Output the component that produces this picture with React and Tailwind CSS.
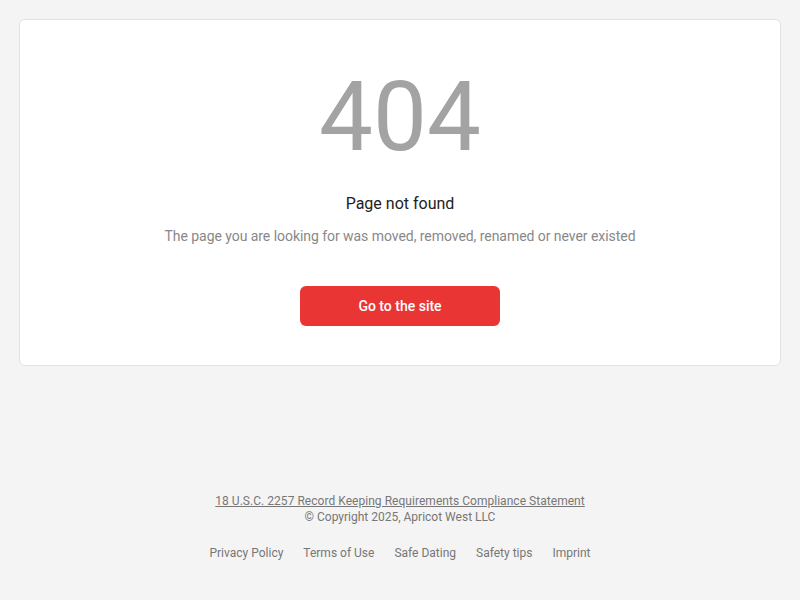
export default function App() {
  return (
    <div className="min-h-[600px] bg-[#f4f4f4] px-[19px] pt-[19px]" style={{ fontFamily: "Roboto, 'Liberation Sans', sans-serif" }}>
      <div className="flex flex-col items-center rounded-md border border-[#e2e2e2] bg-white pt-[49px] pb-[39px]">
        <div className="text-[96px] leading-[96px] text-[#a3a3a3]">404</div>
        <div className="mt-[27px] text-[16px] leading-[24px] text-[#222]">Page not found</div>
        <div className="mt-[10px] text-[14px] leading-[20px] tracking-[-0.05px] text-[#888]">The page you are looking for was moved, removed, renamed or never existed</div>
        <button className="mt-[40px] flex h-[40px] w-[200px] items-center justify-center rounded-md bg-[#ea3535] text-[14px] font-medium text-white">Go to the site</button>
      </div>
      <div className="mt-[127px] flex flex-col items-center text-[12px] leading-[16px] text-[#777]">
        <a className="underline tracking-[0.003em]">18 U.S.C. 2257 Record Keeping Requirements Compliance Statement</a>
        <div>© Copyright 2025, Apricot West LLC</div>
        <div className="mt-[20px] flex gap-[20px]">
          <span>Privacy Policy</span>
          <span>Terms of Use</span>
          <span>Safe Dating</span>
          <span>Safety tips</span>
          <span>Imprint</span>
        </div>
      </div>
    </div>
  );
}
